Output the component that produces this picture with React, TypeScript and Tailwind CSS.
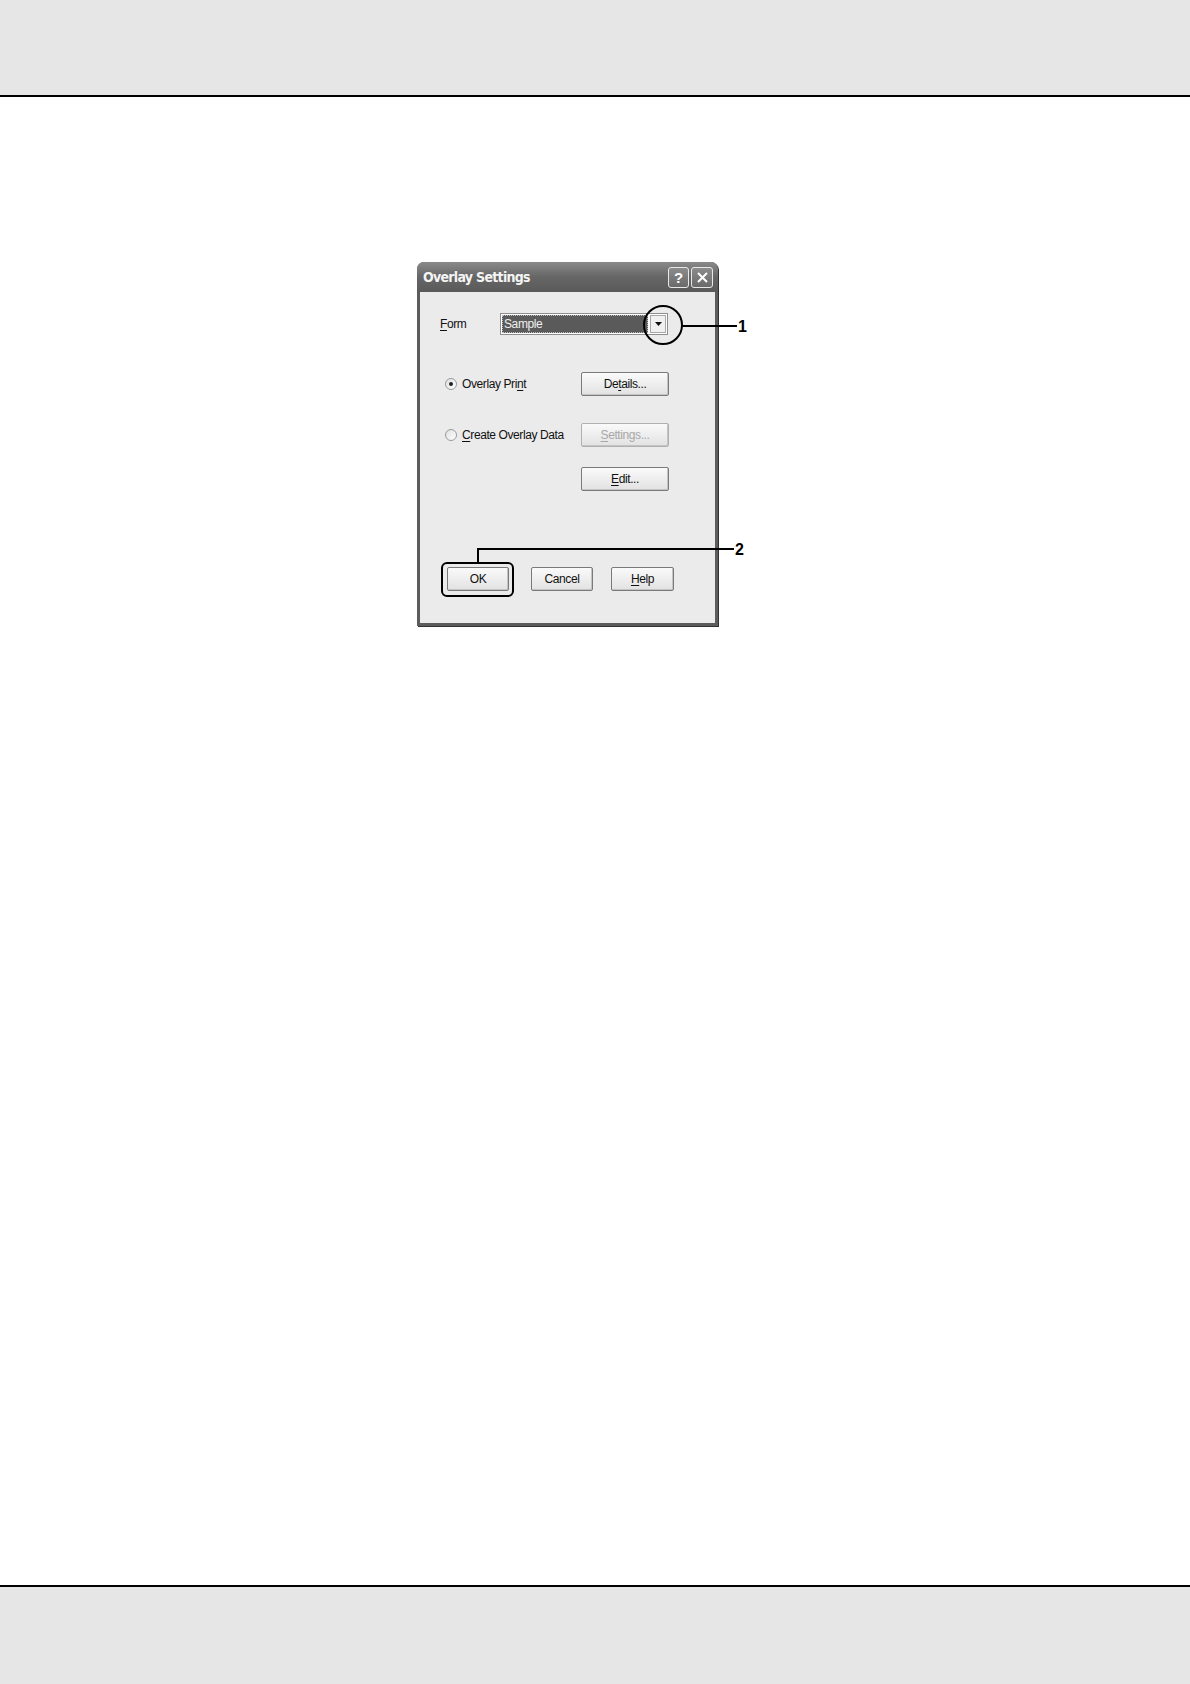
import type { ReactNode } from "react";

function Key({ children }: { children: ReactNode }) {
  return <span className="underline underline-offset-2">{children}</span>;
}

function XpButton({
  children,
  disabled = false,
  className = "",
}: {
  children: ReactNode;
  disabled?: boolean;
  className?: string;
}) {
  return (
    <div
      className={`flex h-[24px] items-center justify-center rounded-[2px] border border-[#7a7a7a] bg-gradient-to-b from-[#fafafa] to-[#e2e2e2] text-[12px] tracking-[-0.4px] shadow-[inset_-1px_-1px_0_#c4c4c4] ${
        disabled ? "text-[#a8a8a8]" : "text-[#111]"
      } ${className}`}
    >
      {children}
    </div>
  );
}

function Radio({ checked }: { checked: boolean }) {
  return (
    <div className="flex h-[12px] w-[12px] items-center justify-center rounded-full border border-[#9a9a9a] bg-gradient-to-br from-[#e0e0e0] to-white">
      {checked ? <div className="h-[4px] w-[4px] rounded-full bg-[#222]" /> : null}
    </div>
  );
}

function Dialog() {
  return (
    <div className="ml-[417px] mt-[165px] flex h-[364px] w-[301px] flex-col overflow-hidden rounded-t-[7px] bg-[#5c5c5c] shadow-[1px_1px_0_#333]">
      {/* title bar */}
      <div className="flex h-[30px] items-center bg-gradient-to-b from-[#8a8a8a] via-[#666] to-[#5a5a5a] pl-[6px] pr-[5px]">
        <span className="text-[14px] font-bold tracking-[-0.7px] text-[#f4f4f4] [font-family:'DejaVu_Sans_Condensed','Liberation_Sans',sans-serif]">
          Overlay Settings
        </span>
        <div className="ml-auto flex gap-[2px]">
          <div className="flex h-[21px] w-[21px] items-center justify-center rounded-[3px] border border-[#e8e8e8] bg-gradient-to-b from-[#8c8c8c] to-[#6a6a6a] text-[15px] font-bold leading-none text-white">
            ?
          </div>
          <div className="flex h-[21px] w-[22px] items-center justify-center rounded-[3px] border border-[#e8e8e8] bg-gradient-to-b from-[#8c8c8c] to-[#6a6a6a]">
            <svg width="13" height="13" viewBox="0 0 13 13">
              <path d="M2 2 L11 11 M11 2 L2 11" stroke="#fff" strokeWidth="2" />
            </svg>
          </div>
        </div>
      </div>
      {/* body */}
      <div className="mx-[3px] mb-[3px] flex flex-1 flex-col bg-[#ebebeb] pl-[20px] text-[12px] tracking-[-0.4px] text-[#111]">
        <div className="mt-[21px] flex h-[22px] items-center">
          <span className="w-[60px]">
            <Key>F</Key>orm
          </span>
          <div className="flex h-[22px] w-[168px] items-center border border-[#8e8e8e] bg-white p-[1px]">
            <div className="flex h-full flex-1 items-center bg-[#5a5a5a] pl-[2px] text-[#f0f0f0] outline-1 outline-dotted outline-[#bbb] -outline-offset-1">
              Sample
            </div>
            <div className="ml-[2px] flex h-full w-[16px] items-center justify-center border border-[#a8a8a8] bg-[#f0f0f0]">
              <svg width="7" height="4" viewBox="0 0 7 4">
                <path d="M0 0 H7 L3.5 4 Z" fill="#111" />
              </svg>
            </div>
          </div>
        </div>

        <div className="mt-[37px] flex h-[23px] items-center">
          <div className="ml-[5px]">
            <Radio checked />
          </div>
          <span className="ml-[5px]">
            Overlay Pri<Key>n</Key>t
          </span>
          <XpButton className="ml-auto mr-[46px] h-[23px] w-[88px]">
            De<Key>t</Key>ails...
          </XpButton>
        </div>

        <div className="mt-[28px] flex h-[23px] items-center">
          <div className="ml-[5px]">
            <Radio checked={false} />
          </div>
          <span className="ml-[5px]">
            <Key>C</Key>reate Overlay Data
          </span>
          <XpButton disabled className="ml-auto mr-[46px] h-[23px] w-[88px] border-[#b0b0b0]">
            <Key>S</Key>ettings...
          </XpButton>
        </div>

        <div className="mt-[21px] flex h-[23px] items-center">
          <XpButton className="ml-auto mr-[46px] h-[23px] w-[88px]">
            <Key>E</Key>dit...
          </XpButton>
        </div>

        <div className="mt-[77px] flex items-center gap-[22px] pl-[7px]">
          <XpButton className="w-[62px]">OK</XpButton>
          <XpButton className="w-[62px]">Cancel</XpButton>
          <XpButton className="-ml-[4px] w-[63px]">
            <Key>H</Key>elp
          </XpButton>
        </div>
      </div>
    </div>
  );
}

function Callouts() {
  return (
    <svg
      className="pointer-events-none absolute left-0 top-0"
      width="1190"
      height="1684"
      viewBox="0 0 1190 1684"
    >
      <circle cx="663" cy="325" r="19" fill="none" stroke="#000" strokeWidth="2" />
      <path d="M682 326 H737" stroke="#000" strokeWidth="2" />
      <text x="738" y="332" fontSize="16" fontWeight="600" fontFamily="Liberation Sans, Arial, sans-serif" fill="#000">
        1
      </text>
      <rect x="442" y="563" width="71" height="33" rx="5" fill="none" stroke="#000" strokeWidth="2" />
      <path d="M478 563 V549 H734" fill="none" stroke="#000" strokeWidth="2" />
      <text x="735" y="555" fontSize="16" fontWeight="600" fontFamily="Liberation Sans, Arial, sans-serif" fill="#000">
        2
      </text>
    </svg>
  );
}

export default function App() {
  return (
    <div className="relative flex h-[1684px] w-[1190px] flex-col bg-white [font-family:'Liberation_Sans',Arial,sans-serif]">
      <div className="h-[97px] shrink-0 border-b-2 border-black bg-[#e6e6e6]" />
      <Dialog />
      <div className="mt-auto h-[99px] shrink-0 border-t-2 border-black bg-[#e6e6e6]" />
      <Callouts />
    </div>
  );
}
